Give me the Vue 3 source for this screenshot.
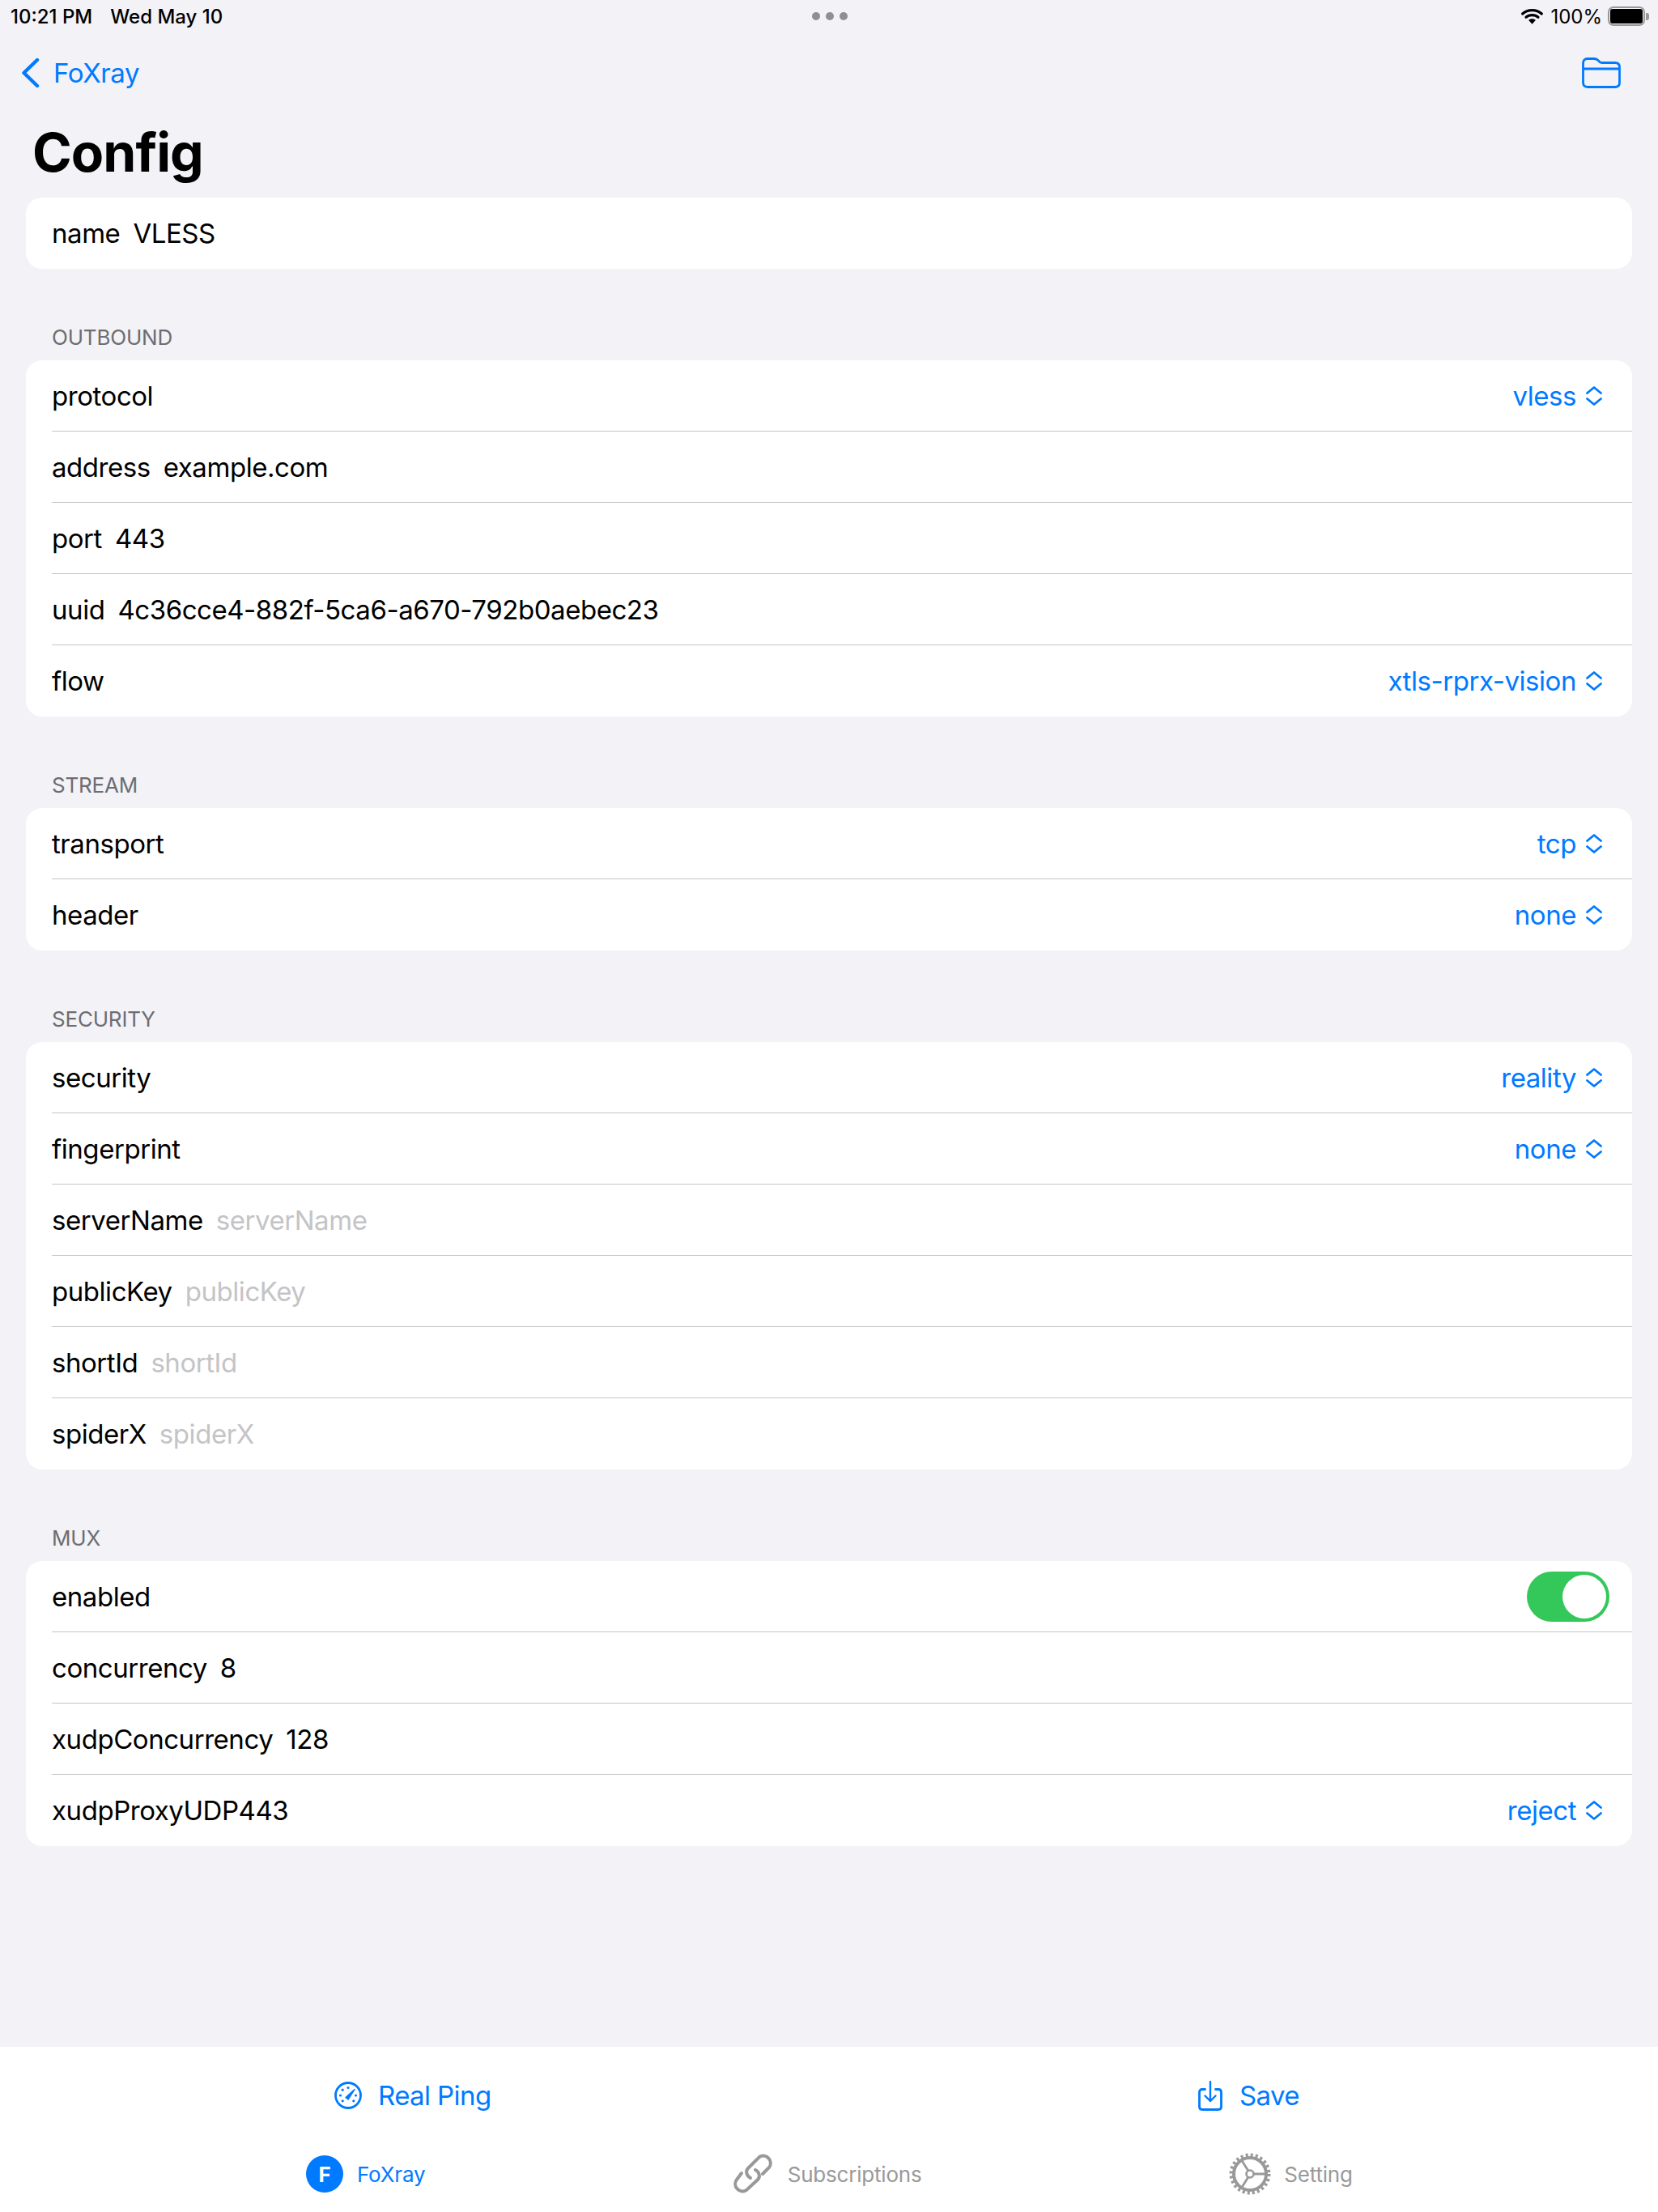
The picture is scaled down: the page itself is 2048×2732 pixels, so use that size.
<template>
  <div class="page">
    <div class="status">
      <div class="status-left">
        <span>10:21 PM</span>
        <span>Wed May 10</span>
      </div>
      <div class="dots"><i></i><i></i><i></i></div>
      <div class="status-right">
        <svg class="wifi" width="27" height="20" viewBox="0 0 27 20">
          <path d="M1.700 7 C8 1.200 19 1.200 25.300 7" fill="none" stroke="#000" stroke-width="3.200" stroke-linecap="round" />
          <path d="M6 11.300 C10 7.800 17 7.800 21 11.300" fill="none" stroke="#000" stroke-width="3.200" stroke-linecap="round" />
          <path d="M9 14.800 C11.500 12.600 15.500 12.600 18 14.800 L13.500 19.800 Z" fill="#000" />
        </svg>
        <span>100%</span>
        <div class="battery"><div class="battery-fill"></div></div>
        <div class="battery-tip"></div>
      </div>
    </div>

    <div class="nav">
      <div class="back">
        <svg width="24" height="38" viewBox="0 0 24 38">
          <path d="M20 3 L3.500 19 L20 35" fill="none" stroke="#007aff" stroke-width="4.400" stroke-linecap="round" stroke-linejoin="round" />
        </svg>
        <span>FoXray</span>
      </div>
      <svg class="folder" width="48" height="38" viewBox="0 0 48 38">
        <path d="M1.500 7 Q1.500 1.500 7 1.500 H15 Q18 1.500 20 3.500 L22 5.500 Q23 6.500 25 6.500 H41 Q46.500 6.500 46.500 12 V31 Q46.500 36.500 41 36.500 H7 Q1.500 36.500 1.500 31 Z M1.500 14 H46.500" fill="none" stroke="#007aff" stroke-width="2.800" stroke-linejoin="round" />
      </svg>
    </div>

    <h1 class="title">Config</h1>

    <div class="sections">
      <section v-for="s in sections" :key="s.title" class="section">
        <div v-if="s.title" class="section-title">{{ s.title }}</div>
        <div class="card">
          <div v-for="r in s.rows" :key="r.label" class="row">
            <span class="label">{{ r.label }}</span>
            <span v-if="r.value" class="value">{{ r.value }}</span>
            <span v-if="r.placeholder" class="placeholder">{{ r.placeholder }}</span>
            <span v-if="r.pick" class="pick">
              {{ r.pick }}
              <svg width="24" height="26" viewBox="0 0 24 26">
                <path d="M3.500 9.500 L12 2.500 L20.500 9.500 M3.500 16.500 L12 23.500 L20.500 16.500" fill="none" stroke="#007aff" stroke-width="2.800" stroke-linecap="round" stroke-linejoin="round" />
              </svg>
            </span>
            <span v-if="r.toggle" class="toggle"><span class="knob"></span></span>
          </div>
        </div>
      </section>
    </div>

    <div class="bottom">
      <div class="actions">
        <div class="action ping">
          <svg width="36" height="36" viewBox="0 0 36 36">
            <circle cx="18" cy="18" r="15.500" fill="none" stroke="#007aff" stroke-width="2.800" />
            <path d="M15 20.500 L26 10.500 L18 23 Z" fill="#007aff" stroke="#007aff" stroke-width="1.400" stroke-linejoin="round" />
            <g fill="#007aff">
              <circle cx="18" cy="8.500" r="1.600" />
              <circle cx="11.200" cy="11.200" r="1.600" />
              <circle cx="8.500" cy="18" r="1.600" />
              <circle cx="11.200" cy="24.800" r="1.600" />
              <circle cx="27.500" cy="18" r="1.600" />
              <circle cx="24.800" cy="24.800" r="1.600" />
            </g>
          </svg>
          <span>Real Ping</span>
        </div>
        <div class="action save">
          <svg width="30" height="37" viewBox="0 0 30 37">
            <path d="M8.500 10.500 H5 Q1.500 10.500 1.500 14 V32 Q1.500 35.500 5 35.500 H25 Q28.500 35.500 28.500 32 V14 Q28.500 10.500 25 10.500 H21.500" fill="none" stroke="#007aff" stroke-width="2.800" stroke-linecap="round" />
            <path d="M15 1 V25 M8.500 18.500 L15 25 L21.500 18.500" fill="none" stroke="#007aff" stroke-width="2.400" stroke-linecap="round" stroke-linejoin="round" />
          </svg>
          <span>Save</span>
        </div>
      </div>
      <div class="tabs">
        <div class="tab active foxray">
          <span class="badge">F</span>
          <span>FoXray</span>
        </div>
        <div class="tab subs">
          <svg width="50" height="50" viewBox="0 0 50 50">
            <g fill="none" stroke="#999" stroke-width="4" stroke-linecap="round">
              <path d="M37 25 L45 17 A9 9 0 0 0 33 4 L19 18 C15.500 21.500 17 27 22 30" />
              <path d="M11 24 L5 32 A9 9 0 0 0 17 45 L31 32 C34.500 28.500 33 22.500 28 20" />
            </g>
          </svg>
          <span>Subscriptions</span>
        </div>
        <div class="tab setting">
          <svg width="52" height="52" viewBox="0 0 52 52">
            <circle cx="26" cy="26" r="20" fill="none" stroke="#999" stroke-width="4" />
            <circle cx="26" cy="26" r="23" fill="none" stroke="#999" stroke-width="5" stroke-dasharray="3.010 3.010" />
            <circle cx="26" cy="26" r="4.500" fill="none" stroke="#999" stroke-width="2.600" />
            <path d="M30.500 26 H46 M23.800 22 L15 8 M23.800 30 L15 44" fill="none" stroke="#999" stroke-width="2.800" />
          </svg>
          <span>Setting</span>
        </div>
      </div>
    </div>
  </div>
</template>

<script setup>
const sections = [
  { title: "", rows: [{ label: "name", value: "VLESS" }] },
  {
    title: "OUTBOUND",
    rows: [
      { label: "protocol", pick: "vless" },
      { label: "address", value: "example.com" },
      { label: "port", value: "443" },
      { label: "uuid", value: "4c36cce4-882f-5ca6-a670-792b0aebec23" },
      { label: "flow", pick: "xtls-rprx-vision" },
    ],
  },
  {
    title: "STREAM",
    rows: [
      { label: "transport", pick: "tcp" },
      { label: "header", pick: "none" },
    ],
  },
  {
    title: "SECURITY",
    rows: [
      { label: "security", pick: "reality" },
      { label: "fingerprint", pick: "none" },
      { label: "serverName", placeholder: "serverName" },
      { label: "publicKey", placeholder: "publicKey" },
      { label: "shortId", placeholder: "shortId" },
      { label: "spiderX", placeholder: "spiderX" },
    ],
  },
  {
    title: "MUX",
    rows: [
      { label: "enabled", toggle: true },
      { label: "concurrency", value: "8" },
      { label: "xudpConcurrency", value: "128" },
      { label: "xudpProxyUDP443", pick: "reject" },
    ],
  },
];
</script>

<style>
html,
body {
  margin: 0;
  background: #f2f2f7;
}
</style>

<style scoped>
.page {
  width: 2048px;
  height: 2732px;
  display: flex;
  flex-direction: column;
  background: #f2f2f7;
  color: #000;
  font-family: Inter, "Liberation Sans", sans-serif;
  overflow: hidden;
}

.status {
  height: 40px;
  padding: 0 11px 0 13px;
  display: grid;
  grid-template-columns: 1fr auto 1fr;
  align-items: center;
  font-size: 24px;
  font-weight: 500;
}

.status-left {
  display: flex;
  gap: 22px;
}

.dots {
  display: flex;
  gap: 7px;
}

.dots i {
  width: 10px;
  height: 10px;
  border-radius: 50%;
  background: #8e8e93;
}

.status-right {
  display: flex;
  align-items: center;
  justify-content: flex-end;
  font-weight: 400;
}

.wifi {
  margin-right: 9px;
}

.battery {
  width: 46px;
  height: 24px;
  margin-left: 7px;
  padding: 1px;
  box-sizing: border-box;
  border: 2px solid #999;
  border-radius: 7px;
}

.battery-fill {
  height: 100%;
  background: #000;
  border-radius: 3px;
}

.battery-tip {
  width: 4px;
  height: 9px;
  margin-left: 1px;
  background: #999;
  border-radius: 0 3px 3px 0;
}

.nav {
  height: 100px;
  padding: 0 46px 0 26px;
  display: flex;
  align-items: center;
  justify-content: space-between;
}

.back {
  display: flex;
  align-items: center;
  gap: 16px;
  color: #007aff;
  font-size: 33px;
  letter-spacing: -0.4px;
}

.title {
  margin: 0;
  height: 104px;
  padding: 8px 0 0 40px;
  box-sizing: border-box;
  font-size: 66px;
  line-height: 80px;
  font-weight: 700;
  letter-spacing: -1px;
}

.sections {
  flex: 1;
  padding: 0 32px;
  display: flex;
  flex-direction: column;
}

.section-title {
  height: 113px;
  padding: 0 32px 12px;
  box-sizing: border-box;
  display: flex;
  align-items: flex-end;
  color: #6d6d72;
  font-size: 26px;
  line-height: 32px;
  letter-spacing: -0.2px;
}

.card {
  background: #fff;
  border-radius: 20px;
  overflow: hidden;
}

.row {
  height: 88px;
  padding: 0 32px;
  box-sizing: border-box;
  display: flex;
  align-items: center;
  gap: 16px;
  font-size: 33px;
  letter-spacing: -0.45px;
  position: relative;
}

.row + .row::before {
  content: "";
  position: absolute;
  left: 32px;
  right: 0;
  top: -1px;
  height: 1px;
  background: #c6c6c8;
}

.pick {
  margin-left: auto;
  margin-right: 3px;
  display: flex;
  align-items: center;
  gap: 10px;
  color: #007aff;
}

.placeholder {
  color: #c4c4c6;
}

.toggle {
  margin-left: auto;
  margin-right: -4px;
  width: 102px;
  height: 62px;
  border-radius: 31px;
  background: #34c759;
  padding: 4px;
  box-sizing: border-box;
  display: flex;
  justify-content: flex-end;
}

.knob {
  width: 54px;
  height: 54px;
  border-radius: 50%;
  background: #fff;
}

.bottom {
  height: 204px;
  background: #fff;
  display: flex;
  flex-direction: column;
}

.actions {
  height: 120px;
  display: grid;
  grid-template-columns: 1fr 1fr;
}

.action {
  display: flex;
  align-items: center;
  gap: 19px;
  color: #007aff;
  font-size: 33px;
  letter-spacing: -0.6px;
}

.ping {
  padding-left: 412px;
}

.save {
  padding-left: 456px;
  gap: 21px;
}

.tabs {
  height: 84px;
  display: grid;
  grid-template-columns: 1fr 1fr 1fr;
}

.tab {
  display: flex;
  align-items: center;
  color: #999;
  font-size: 26px;
  letter-spacing: -0.2px;
  padding-bottom: 10px;
  gap: 16px;
}

.tab.active {
  color: #007aff;
}

.foxray {
  padding-left: 378px;
  gap: 17px;
}

.subs {
  padding-left: 222px;
  gap: 18px;
}

.setting {
  padding-left: 153px;
}

.badge {
  width: 46px;
  height: 46px;
  border-radius: 50%;
  background: #007aff;
  color: #fff;
  display: flex;
  align-items: center;
  justify-content: center;
  font-size: 26px;
  font-weight: 700;
}
</style>
